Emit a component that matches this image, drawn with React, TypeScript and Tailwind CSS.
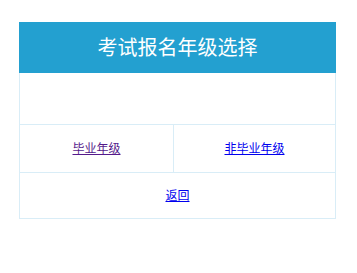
import React from "react";

export default function App() {
  const font = { fontFamily: '"Liberation Sans", "Noto Sans CJK SC", sans-serif' };
  return (
    <div className="w-[357px] h-[273px] bg-white" style={font}>
      <div className="pt-[22px] pl-[19px]">
        <div className="w-[317px]">
          <div className="h-[51px] bg-[#23a0d0] flex items-center justify-center text-white text-[20px]">
            考试报名年级选择
          </div>
          <div className="border-x border-b border-[#d9edf7]">
            <div className="h-[52px] border-b border-[#d9edf7]"></div>
            <div className="h-[48px] border-b border-[#d9edf7] flex text-[12px]">
              <div className="w-[154px] border-r border-[#d9edf7] flex items-center justify-center">
                <a href="#" className="text-[#551a8b] underline">毕业年级</a>
              </div>
              <div className="flex-1 flex items-center justify-center">
                <a href="#" className="text-[#0000ee] underline">非毕业年级</a>
              </div>
            </div>
            <div className="h-[45px] flex items-center justify-center text-[12px]">
              <a href="#" className="text-[#0000ee] underline">返回</a>
            </div>
          </div>
        </div>
      </div>
    </div>
  );
}
